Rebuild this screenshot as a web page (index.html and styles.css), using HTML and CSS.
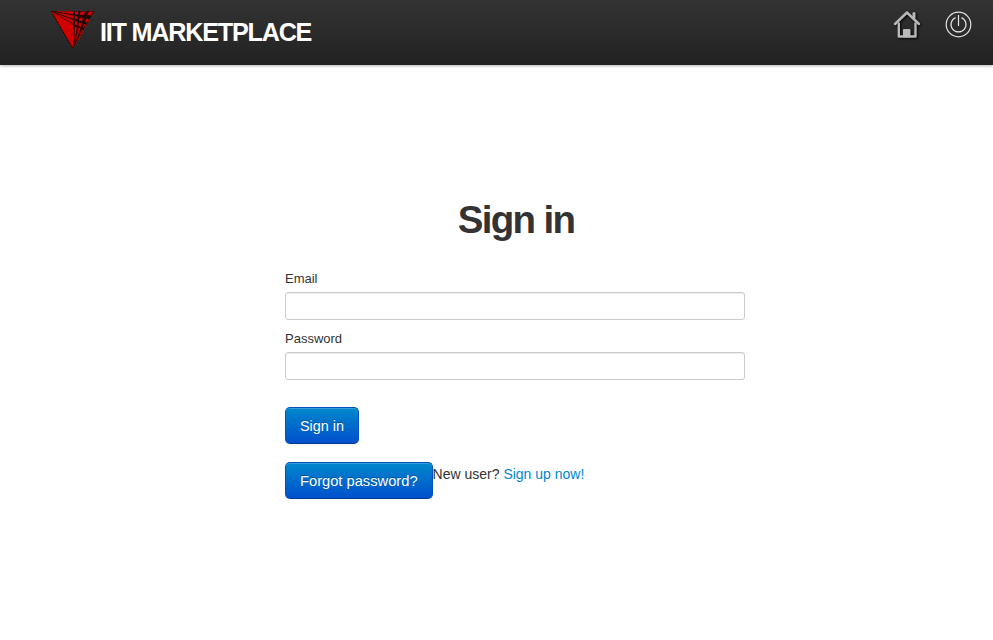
FILE: index.html
```html
<!DOCTYPE html>
<html lang="en">
<head>
<meta charset="utf-8">
<title>IIT Marketplace</title>
<link rel="stylesheet" href="styles.css">
</head>
<body>
<header class="navbar">
  <a class="brand" href="#">
    <svg class="logo" width="44" height="40" viewBox="0 0 44 40">
      <path d="M0 1H43L21.5 38Z" fill="#210606"/>
      <path d="M0 1L22.5 15V36L21.5 38Z" fill="#d00000"/>
      <path d="M3 1.3H22.5V4.2ZM4 2.2L22.5 9V5.5ZM4 3L22.5 14V10.3Z" fill="#d00000"/>
      <g fill="#d00000">
        <path d="M24 1.5H27V4.5H24ZM29.5 1.5H34L33 5H29ZM38 1.5H42.5L40.5 5.5L36 5Z"/>
        <path d="M24 6L26.5 6.5V9.5L24 9ZM28.5 7.5L32 8L31 11.5L28 10.5ZM35.5 8.5L39 9.5L37 13L34 12Z"/>
        <path d="M24 11L26 11.5V15.5L24 14.5ZM28 12.5L31 13.5L30 17L27.3 15.5ZM33 14L36 15L34 18.5L31.8 17Z"/>
        <path d="M24 16.5L26 17.5L23.2 32ZM27.5 17.5L29.5 18.5L23.2 35ZM31 19.5L33.3 20.5L23 37Z"/>
      </g>
      <path d="M0 1L21.5 38L43 1" fill="none" stroke="#200404" stroke-dasharray="2 1"/>
    </svg>
    <span class="brand-name">IIT MARKETPLACE</span>
  </a>
  <nav class="nav-icons">
    <a href="#" aria-label="Home">
      <svg class="icon icon-home" width="28" height="28" viewBox="0 -0.5 28 28" fill="none" stroke="#b8b8b8" stroke-linecap="round" stroke-linejoin="round">
        <path d="M2 13.5L14 2L26 13.5" stroke-width="2.5"/>
        <path d="M21 7V3" stroke-width="3"/>
        <path d="M5.8 13V26H22.5V13" stroke-width="2.4"/>
        <path d="M10.5 26V19H17V26Z" fill="#b8b8b8" stroke-width="1"/>
      </svg>
    </a>
    <a href="#" aria-label="Sign out">
      <svg class="icon" width="28" height="28" viewBox="0.5 -0.5 28 28" fill="none" stroke="#e2e2e2" stroke-width="1.2">
        <circle cx="14" cy="14" r="12.3"/>
        <path d="M11 7.1A7.5 7.5 0 1 0 17 7.1M14 4.5V15.5"/>
      </svg>
    </a>
  </nav>
</header>
<main class="signin">
  <h1>Sign in</h1>
  <form>
    <label for="email">Email</label>
    <input id="email" type="text">
    <label for="password">Password</label>
    <input id="password" type="password">
    <button class="btn" type="button">Sign in</button>
  </form>
  <div class="links">
    <a class="btn" href="#">Forgot password?</a>
    <p>New user? <a href="#">Sign up now!</a></p>
  </div>
</main>
</body>
</html>
```
FILE: styles.css
```css
* { box-sizing: border-box; }
body {
  margin: 0;
  background: #fff;
  color: #333;
  font: 14px/20px "Liberation Sans", Arial, sans-serif;
}
.navbar {
  display: flex;
  justify-content: space-between;
  height: 65px;
  padding: 0 20.5px 0 51px;
  background: linear-gradient(#333, #222);
  box-shadow: 0 1px 3px rgba(0, 0, 0, .3);
}
.brand {
  display: flex;
  height: 50px;
  padding-top: 10px;
  color: #fff;
  text-decoration: none;
}
.logo { margin-right: 5px; }
.brand-name {
  padding-top: 12px;
  font-size: 25.2px;
  font-weight: bold;
  letter-spacing: -1.22px;
  white-space: nowrap;
}
.nav-icons {
  display: flex;
  gap: 23.5px;
  padding-top: 10px;
}
.icon { display: block; }
.icon-home { filter: drop-shadow(1px 1px 1px #000); }
.signin {
  width: 462px;
  margin: 135px 0 0 285px;
}
h1 {
  margin: 0 0 29px;
  font-size: 38.5px;
  line-height: 40px;
  letter-spacing: -1.7px;
  text-align: center;
}
label {
  display: block;
  margin-bottom: 3px;
  font-size: 13px;
}
input {
  display: block;
  width: 460px;
  height: 28px;
  margin: 0 0 9px;
  padding: 4px 6px;
  border: 1px solid #ccc;
  border-radius: 3px;
  box-shadow: inset 0 1px 1px rgba(0, 0, 0, .075);
}
.btn {
  display: block;
  height: 37px;
  padding: 1px 14px 0;
  border: 1px solid #0050c0;
  border-bottom-color: #003c91;
  border-radius: 5px;
  background: linear-gradient(#0088cc, #0050cc);
  box-shadow: inset 0 1px 0 rgba(255, 255, 255, .2), 0 1px 2px rgba(0, 0, 0, .05);
  color: #fff;
  font: 14.7px/35px "Liberation Sans", Arial, sans-serif;
  text-decoration: none;
  text-shadow: 0 -1px 0 rgba(0, 0, 0, .25);
  white-space: nowrap;
}
form .btn {
  margin-top: 27px;
  font-size: 14.4px;
}
.links {
  display: flex;
  margin-top: 18px;
}
.links p { margin: 2px 0 0; }
.links p a {
  color: #0088cc;
  text-decoration: none;
}
```
